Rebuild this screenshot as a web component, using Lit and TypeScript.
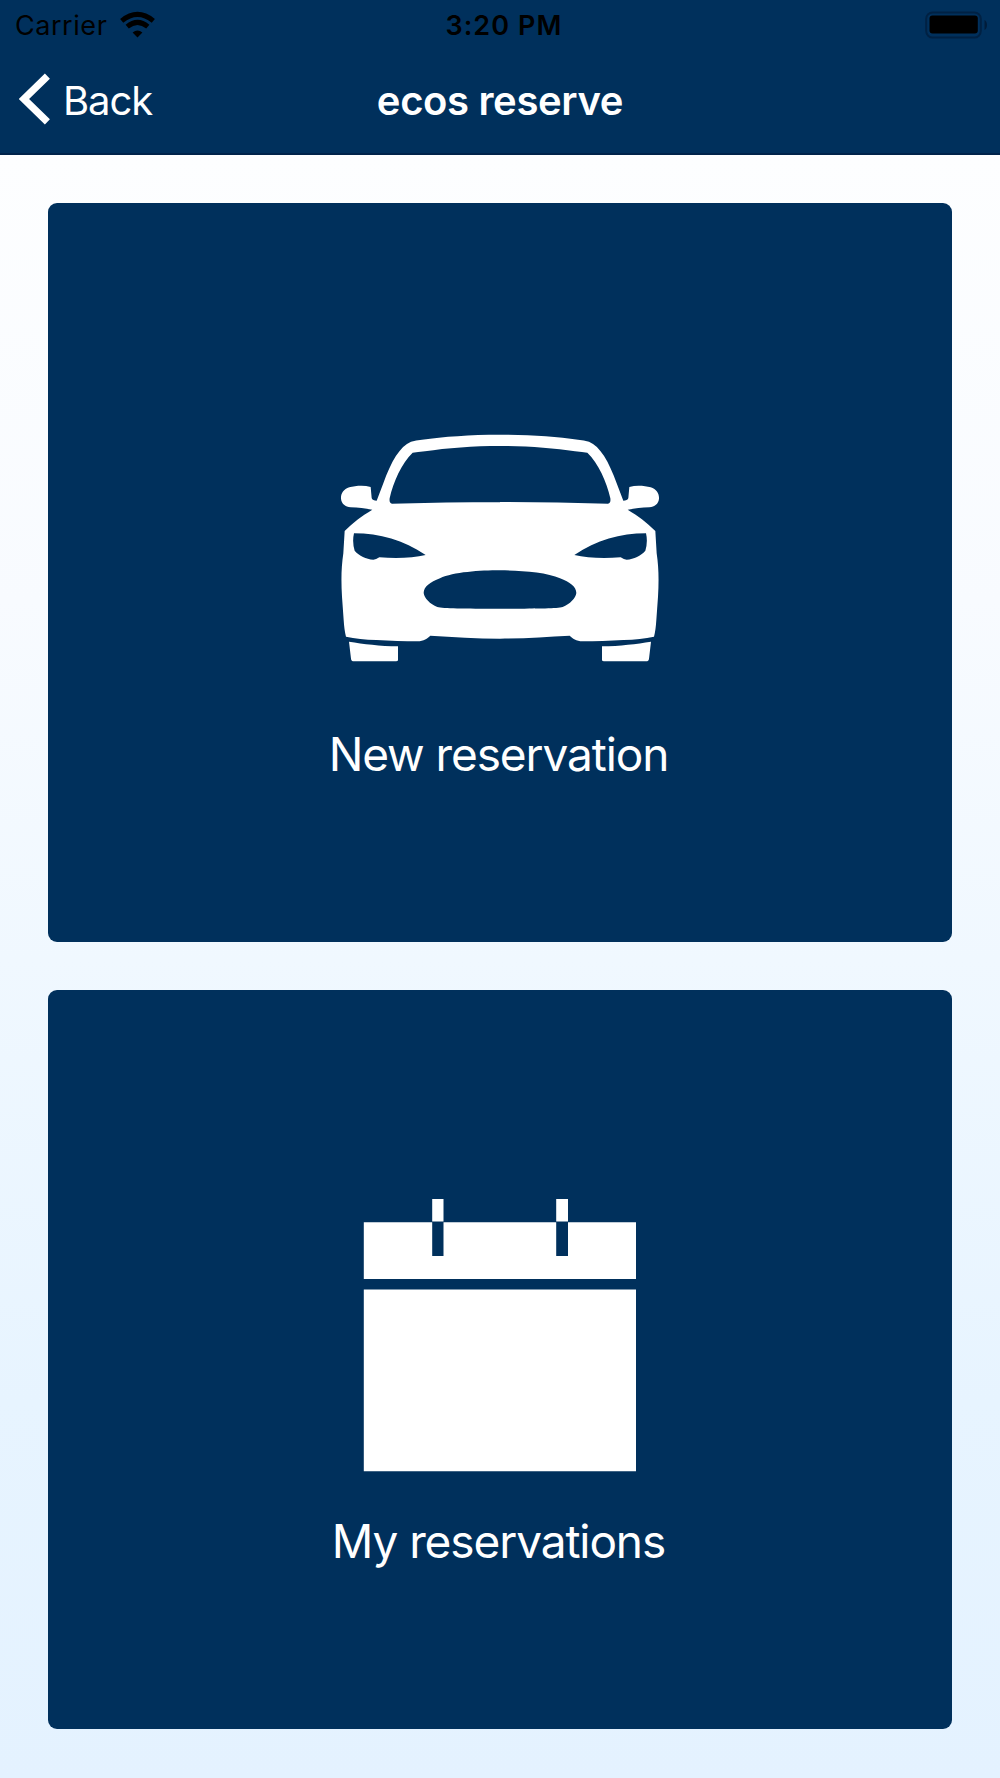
import { LitElement, html, svg, css } from "lit";
import { customElement, property } from "lit/decorators.js";

const carHalf = svg`
  <path fill-rule="evenodd" d="M510 44C420 44 340 50 276 59Q258 60 243 65C210 78 183 125 160 190L140 242C133 241 126 240 125 234L122 201C100 195 75 198 58 202C40 208 32 222 33 236C35 252 46 260 62 262C85 263 105 265 127 269C95 288 70 307 44 333L40 400C34 440 33 480 36 530L41 600Q43 632 48 650C75 655 105 659 140 660C180 662 225 664 262 664C282 663 292 656 301 647C370 650 440 656 510 656Z
  M510 78C430 78 350 84 285 94Q262 97 248 98C215 130 190 185 179 235Q177 250 186 251Q350 247 510 246Z
  M72 340C150 340 220 360 287 405C250 414 200 416 148 412Q138 419 130 419C108 417 88 408 74 392Q66 366 72 340Z
  M510 451C450 451 370 456 330 475C300 487 281 500 281 519C283 535 300 552 322 561C340 566 400 566 510 566Z"/>
  <path d="M57 665C100 672 150 678 204 679V720Q204 724 198 724H72Q64 724 63 716Z"/>`;

const carIcon = html`<svg width="320" height="273" viewBox="30 -24 960 819" fill="#fff">
  <g>${carHalf}</g>
  <g transform="matrix(-1 0 0 1 1020 0)">${carHalf}</g>
</svg>`;

const calendarIcon = html`<svg width="272" height="273" viewBox="0.5 0 272 273" fill="#fff">
  <path d="M0.3 23.2H68.7V57H80V23.2H192.7V57H204.5V23.2H272.5V80H0.3ZM0.3 90.4H272.5V272.3H0.3ZM68.7 0H80V22.5H68.7ZM192.7 0H204.5V22.5H192.7Z"/>
</svg>`;

@customElement("status-bar")
export class StatusBar extends LitElement {
  static styles = css`
    :host {
      display: grid;
      grid-template-columns: 1fr auto 1fr;
      align-items: center;
      height: 52px;
      padding: 0 13px 0 15px;
      color: #000;
      font-size: 27px;
      line-height: 34px;
    }
    .left { display: flex; align-items: center; gap: 13px; }
    .carrier { letter-spacing: 0.55px; }
    .time { font-weight: 600; letter-spacing: 1.1px; padding-left: 6px; }
    .right { display: flex; justify-content: flex-end; }
    svg { display: block; overflow: visible; }
    .left svg { margin-top: -3px; }
  `;
  render() {
    return html`
      <div class="left">
        <span class="carrier">Carrier</span>
        <svg width="35" height="26" viewBox="0 0 35 26">
          <path d="M17.5 25.5L12.6 20.5Q17.5 16.6 22.4 20.5Z"/>
          <path d="M7.2 14.6Q17.5 6.2 27.8 14.6" fill="none" stroke="#000" stroke-width="5"/>
          <path d="M1.7 8.9Q17.5 -4 33.3 8.9" fill="none" stroke="#000" stroke-width="5"/>
        </svg>
      </div>
      <span class="time">3:20 PM</span>
      <div class="right">
        <svg width="62" height="28" viewBox="0 0 62 28">
          <rect x="1.2" y="0.4" width="54.6" height="25.2" rx="6.5" fill="none" stroke="#002143" stroke-width="2"/>
          <rect x="4.5" y="3.6" width="48.3" height="17.8" rx="3"/>
          <path d="M59.5 8C62.8 9.5 62.8 16.5 59.5 18Z" fill="#001c3a"/>
        </svg>
      </div>`;
  }
}

@customElement("nav-bar")
export class NavBar extends LitElement {
  static styles = css`
    :host {
      display: grid;
      grid-template-columns: 1fr auto 1fr;
      align-items: center;
      height: 98px;
      color: #fff;
      font-size: 40px;
      line-height: 48px;
    }
    .back { display: flex; align-items: center; gap: 12px; padding-left: 19px; }
    .label { letter-spacing: -1.1px; }
    .title { font-weight: 600; letter-spacing: -0.35px; }
    svg { display: block; margin-top: -4px; }
  `;
  render() {
    return html`
      <div class="back">
        <svg width="32" height="52" viewBox="0 0 32 52">
          <path d="M28.4 3.2L5 26L28.4 48.8" fill="none" stroke="#fff" stroke-width="7.2"/>
        </svg>
        <span class="label">Back</span>
      </div>
      <span class="title">ecos reserve</span>`;
  }
}

@customElement("menu-tile")
export class MenuTile extends LitElement {
  @property() label = "";
  @property({ attribute: false }) icon: unknown = null;
  static styles = css`
    :host {
      display: flex;
      flex-direction: column;
      align-items: center;
      gap: 41px;
      box-sizing: border-box;
      height: 739px;
      padding-top: 209px;
      border-radius: 9px;
      background: #00305c;
      color: #fff;
    }
    svg { display: block; overflow: visible; }
    .label { font-size: 46px; line-height: 56px; letter-spacing: -1.1px; padding-right: 3px; }
  `;
  render() {
    return html`${this.icon}<span class="label">${this.label}</span>`;
  }
}

@customElement("app-root")
export class AppRoot extends LitElement {
  static styles = css`
    :host {
      display: flex;
      flex-direction: column;
      box-sizing: border-box;
      height: 1778px;
      font-family: Inter, "Liberation Sans", sans-serif;
      background: linear-gradient(#fdfeff 154px, #f8fbff 600px, #f0f8ff 960px, #e7f4ff 1400px, #e4f2ff 1778px);
    }
    .header { height: 155px; box-sizing: border-box; background: #00305c; border-bottom: 2px solid #00234a; }
    .tiles { display: flex; flex-direction: column; gap: 48px; padding: 48px; }
  `;
  render() {
    return html`
      <div class="header">
        <status-bar></status-bar>
        <nav-bar></nav-bar>
      </div>
      <div class="tiles">
        <menu-tile label="New reservation" .icon=${carIcon}></menu-tile>
        <menu-tile label="My reservations" .icon=${calendarIcon}></menu-tile>
      </div>`;
  }
}
